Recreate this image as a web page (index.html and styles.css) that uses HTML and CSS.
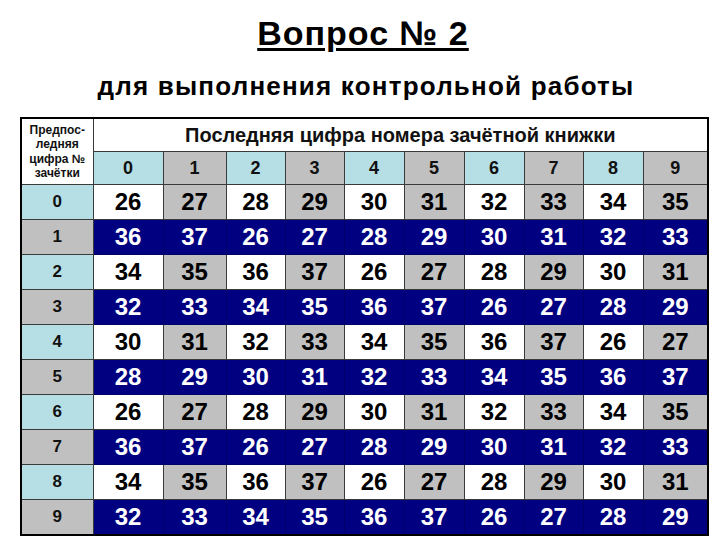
FILE: index.html
```html
<!DOCTYPE html>
<html lang="ru">
<head>
<meta charset="utf-8">
<title>Вопрос № 2</title>
<link rel="stylesheet" href="styles.css">
</head>
<body>
<div class="slide">
  <h1 class="title">Вопрос № 2</h1>
  <h2 class="subtitle">для выполнения контрольной работы</h2>
  <table class="grid">
    <colgroup>
      <col class="c-label"><col class="c0"><col class="c1"><col class="c2"><col class="c3"><col class="c4"><col class="c5"><col class="c6"><col class="c7"><col class="c8"><col class="c9">
    </colgroup>
    <tr class="head1">
      <th class="corner" rowspan="2">Предпос-<br>ледняя<br>цифра №<br>зачётки</th>
      <th class="caption" colspan="10">Последняя цифра номера зачётной книжки</th>
    </tr>
    <tr class="head2">
      <th>0</th><th>1</th><th>2</th><th>3</th><th>4</th><th>5</th><th>6</th><th>7</th><th>8</th><th>9</th>
    </tr>
    <tr class="light"><th>0</th><td>26</td><td>27</td><td>28</td><td>29</td><td>30</td><td>31</td><td>32</td><td>33</td><td>34</td><td>35</td></tr>
    <tr class="dark"><th>1</th><td>36</td><td>37</td><td>26</td><td>27</td><td>28</td><td>29</td><td>30</td><td>31</td><td>32</td><td>33</td></tr>
    <tr class="light"><th>2</th><td>34</td><td>35</td><td>36</td><td>37</td><td>26</td><td>27</td><td>28</td><td>29</td><td>30</td><td>31</td></tr>
    <tr class="dark"><th>3</th><td>32</td><td>33</td><td>34</td><td>35</td><td>36</td><td>37</td><td>26</td><td>27</td><td>28</td><td>29</td></tr>
    <tr class="light"><th>4</th><td>30</td><td>31</td><td>32</td><td>33</td><td>34</td><td>35</td><td>36</td><td>37</td><td>26</td><td>27</td></tr>
    <tr class="dark"><th>5</th><td>28</td><td>29</td><td>30</td><td>31</td><td>32</td><td>33</td><td>34</td><td>35</td><td>36</td><td>37</td></tr>
    <tr class="light"><th>6</th><td>26</td><td>27</td><td>28</td><td>29</td><td>30</td><td>31</td><td>32</td><td>33</td><td>34</td><td>35</td></tr>
    <tr class="dark"><th>7</th><td>36</td><td>37</td><td>26</td><td>27</td><td>28</td><td>29</td><td>30</td><td>31</td><td>32</td><td>33</td></tr>
    <tr class="light"><th>8</th><td>34</td><td>35</td><td>36</td><td>37</td><td>26</td><td>27</td><td>28</td><td>29</td><td>30</td><td>31</td></tr>
    <tr class="dark"><th>9</th><td>32</td><td>33</td><td>34</td><td>35</td><td>36</td><td>37</td><td>26</td><td>27</td><td>28</td><td>29</td></tr>
  </table>
</div>
</body>
</html>
```

FILE: styles.css
```css
html, body {
  margin: 0;
  padding: 0;
  background: #ffffff;
}

.slide {
  width: 720px;
  height: 540px;
  font-family: "Liberation Sans", Arial, sans-serif;
  color: #000;
  display: flex;
  flex-direction: column;
  align-items: flex-start;
}

.title {
  align-self: stretch;
  margin: 13px 0 0 6px;
  font-size: 34px;
  line-height: 40px;
  font-weight: 700;
  letter-spacing: 1px;
  text-align: center;
  text-decoration: underline;
  text-decoration-thickness: 3px;
  text-underline-offset: 3px;
}

.subtitle {
  align-self: stretch;
  margin: 18px 0 0 12px;
  font-size: 26px;
  line-height: 30px;
  font-weight: 700;
  letter-spacing: 1.2px;
  text-align: center;
}

.grid {
  margin: 16px 0 0 20px;
  width: 687px;
  table-layout: fixed;
  border-collapse: collapse;
  border: 2px solid #000;
}

.c-label { width: 72px; }
.c0 { width: 70px; }
.c1 { width: 63px; }
.c2 { width: 59px; }
.c3 { width: 59px; }
.c4 { width: 60px; }
.c5 { width: 60px; }
.c6 { width: 60px; }
.c7 { width: 59px; }
.c8 { width: 60px; }
.c9 { width: 65px; }

.grid th,
.grid td {
  padding: 0;
  border: 1px solid #3a3a3a;
  text-align: center;
  vertical-align: middle;
}

.corner {
  background: #ffffff;
  font-size: 12px;
  line-height: 14.5px;
  font-weight: 700;
  color: #111;
}

.caption {
  background: #ffffff;
  height: 32px;
  font-size: 20px;
  font-weight: 700;
  color: #111;
}

.head2 th {
  height: 32px;
  font-size: 18px;
  font-weight: 700;
  color: #111;
}
.head2 th:nth-child(odd) { background: #b6dfe5; }
.head2 th:nth-child(even) { background: #c0c0c0; }

.light th,
.dark th {
  height: 34px;
  font-size: 17px;
  font-weight: 700;
  color: #111;
}
.light th { background: #b6dfe5; }
.dark th { background: #c0c0c0; }

.grid td {
  font-size: 24px;
  font-weight: 700;
}

.light td { color: #000; }
.light td:nth-child(even) { background: #ffffff; }
.light td:nth-child(odd) { background: #c0c0c0; }

.dark td {
  background: #000080;
  color: #ffffff;
  border-color: #00006a;
}
```
